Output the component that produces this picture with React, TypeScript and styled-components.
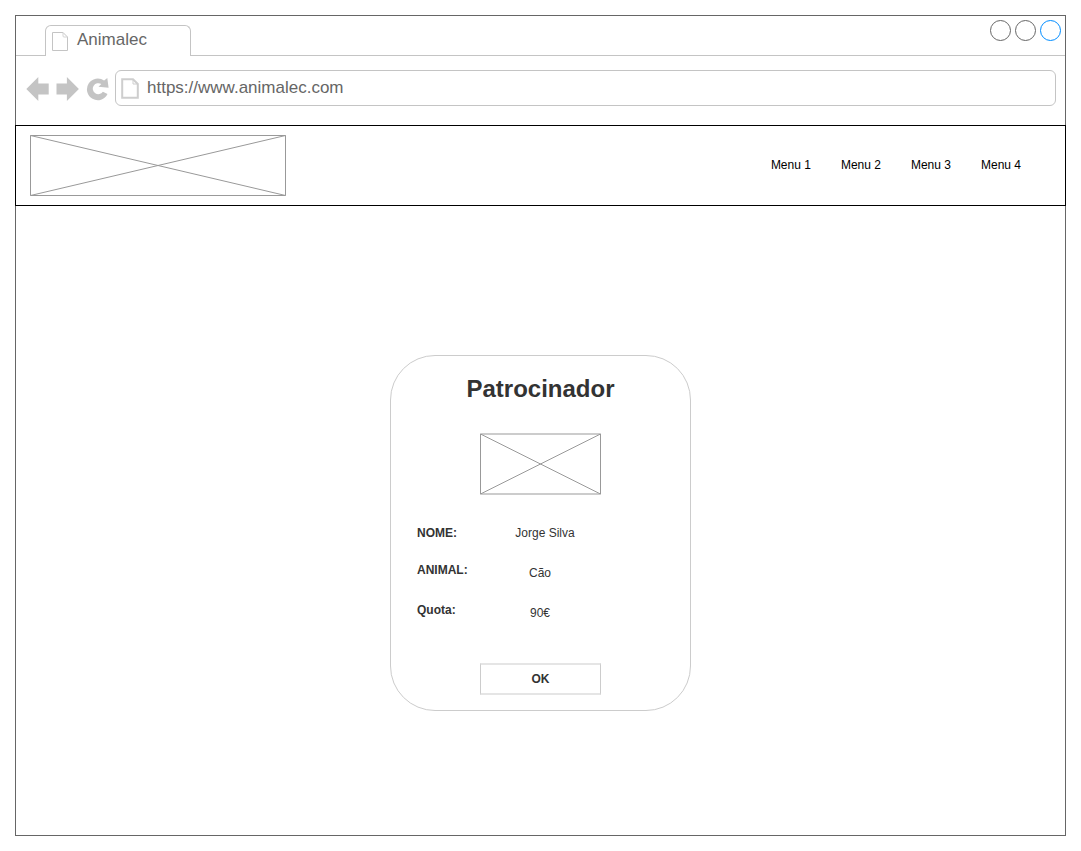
import React from 'react';
import styled, { createGlobalStyle } from 'styled-components';

const GlobalStyle = createGlobalStyle`
  *, *::before, *::after { box-sizing: border-box; }
  body {
    margin: 0;
    background: #fff;
    font-family: "Liberation Sans", Arial, Helvetica, sans-serif;
  }
`;

const Page = styled.div`
  min-height: 100vh;
  padding: 15px;
  display: flex;
  flex-direction: column;
`;

const BrowserWindow = styled.div`
  flex: 1;
  display: flex;
  flex-direction: column;
  border: 1px solid #666;
`;

const TabStrip = styled.div`
  display: flex;
  justify-content: space-between;
  align-items: flex-start;
  height: 40px;
  padding: 4px 4px 0 29px;
  border-bottom: 1px solid #c4c4c4;
`;

const Tab = styled.button`
  display: flex;
  align-items: flex-start;
  gap: 8px;
  width: 146px;
  height: 31px;
  margin: 5px 0 0;
  padding: 4px 6px 0;
  border: 1px solid #c4c4c4;
  border-bottom: 0;
  border-radius: 6px 6px 0 0;
  background: #fff;
  color: #666;
  font: 17px/20px "Liberation Sans", Arial, sans-serif;

  svg { margin-top: 2px; }
`;

const WindowControls = styled.div`
  display: flex;
  gap: 4px;
`;

const WindowControl = styled.button<{ $color: string }>`
  width: 21px;
  height: 21px;
  padding: 0;
  border: 1px solid ${(p) => p.$color};
  border-radius: 50%;
  background: #fff;
`;

const Toolbar = styled.div`
  display: flex;
  align-items: center;
  padding: 14px 9px 19px 10px;
`;

const ToolButton = styled.button`
  display: block;
  height: 30px;
  margin-right: 6px;
  padding: 2px 0;
  border: 0;
  background: none;

  svg { display: block; }
`;

const AddressBar = styled.label`
  flex: 1;
  display: flex;
  align-items: center;
  gap: 8px;
  height: 36px;
  padding: 0 5px;
  border: 1px solid #c4c4c4;
  border-radius: 6px;
`;

const AddressInput = styled.input`
  flex: 1;
  min-width: 0;
  height: 34px;
  padding: 0;
  border: 0;
  outline: 0;
  background: none;
  color: #666;
  font: 17px/20px "Liberation Sans", Arial, sans-serif;
`;

const SiteHeader = styled.header`
  display: flex;
  justify-content: space-between;
  align-items: center;
  height: 81px;
  margin: 0 -1px;
  padding: 0 44px 0 14px;
  border: 1px solid #000;
`;

const Menu = styled.nav`
  display: flex;
  gap: 30px;
  padding-bottom: 2px;
`;

const MenuLink = styled.a`
  color: #000;
  font-size: 12px;
  line-height: 14px;
  text-decoration: none;
`;

const Content = styled.main`
  display: flex;
  justify-content: center;
  padding: 149px 20px 124px;
`;

const Card = styled.section`
  display: flex;
  flex-direction: column;
  align-items: center;
  width: 301px;
  padding: 19px 26px 15px;
  border: 1px solid #ccc;
  border-radius: 45px;
  color: #333;
  font-size: 12px;
`;

const Title = styled.h1`
  margin: 0 0 30px;
  font-size: 24px;
  line-height: 28px;
`;

const Details = styled.dl`
  align-self: stretch;
  display: flex;
  flex-direction: column;
  gap: 20px;
  margin: 28px 0 40px;
`;

const DetailRow = styled.div<{ $align: 'center' | 'start' }>`
  display: flex;
  align-items: ${(p) => p.$align};
  height: 20px;
`;

const DetailLabel = styled.dt`
  width: 83px;
  line-height: 14px;
  font-weight: bold;
`;

const DetailValue = styled.dd<{ $width: number }>`
  width: ${(p) => p.$width}px;
  margin: 0;
  line-height: 20px;
  text-align: center;
`;

const OkButton = styled.button`
  width: 121px;
  height: 32px;
  padding: 0;
  border: solid #ccc;
  border-width: 2px 1px;
  border-top-color: #e5e5e5;
  border-bottom-color: #e5e5e5;
  background: #fff;
  color: #333;
  font: bold 12px/14px "Liberation Sans", Arial, sans-serif;
`;

const Logo = () => (
  <svg width="256" height="61" viewBox="0 0 256 61" fill="none" stroke="#999" role="img" aria-label="Logo">
    <path d="M.5.5h255v60H.5zM.5.5l255 60M.5 60.5l255-60" />
  </svg>
);

const Photo = () => (
  <svg width="121" height="62" viewBox="0 0 121 62" fill="none" stroke="#999" role="img" aria-label="Patrocinador">
    <path d="M.5 1h120v60H.5zM.5 1l120 60M.5 61l120-60" />
  </svg>
);

const TabPageIcon = () => (
  <svg width="17" height="20" viewBox="0 0 17 20" fill="none" stroke="#c4c4c4" aria-hidden="true">
    <path d="M.5.5h10.500l4.500 4.500v13.500H.5z" />
    <path d="M11 .5v3.500q0 1 1 1h3.500" stroke="#d4d4d4" />
  </svg>
);

const AddressPageIcon = () => (
  <svg width="18" height="21" viewBox="0 0 18 21" fill="none" stroke="#cecece" strokeWidth="2" aria-hidden="true">
    <path d="M1.200 1.200h10.800l4.800 4.800v13.800H1.200z" />
    <path d="M12 1.200v4.800h4.800" strokeWidth="1" />
  </svg>
);

const details = [
  { label: 'NOME:', value: 'Jorge Silva', align: 'center', width: 90 },
  { label: 'ANIMAL:', value: 'Cão', align: 'start', width: 80 },
  { label: 'Quota:', value: '90€', align: 'start', width: 80 },
] as const;

export default function App() {
  return (
    <Page>
      <GlobalStyle />
      <BrowserWindow>
        <TabStrip>
          <Tab type="button">
            <TabPageIcon />
            Animalec
          </Tab>
          <WindowControls>
            <WindowControl type="button" aria-label="Minimizar" $color="#666" />
            <WindowControl type="button" aria-label="Maximizar" $color="#666" />
            <WindowControl type="button" aria-label="Fechar" $color="#008cff" />
          </WindowControls>
        </TabStrip>
        <Toolbar>
          <ToolButton type="button" aria-label="Voltar">
            <svg width="24" height="26" viewBox="0 0 24 26" fill="#c4c4c4">
              <path d="M.3 14 12.300 2v6.500h10.400v10.900H12.300v6.500z" />
            </svg>
          </ToolButton>
          <ToolButton type="button" aria-label="Avançar">
            <svg width="24" height="26" viewBox="0 0 24 26" fill="#c4c4c4">
              <path d="M22.900 14 10.900 2v6.500H.5v10.900h10.400v6.500z" />
            </svg>
          </ToolButton>
          <ToolButton type="button" aria-label="Recarregar">
            <svg width="23" height="26" viewBox="0 0 23 26" fill="#c4c4c4">
              <path d="M18.100 5.600 21.300 3.100 22.600 12.800 12.500 11.800 15.300 9.100A5.500 5.500 0 1 0 16.900 16.700L21.500 19A10.800 10.800 0 1 1 18.100 5.600z" />
            </svg>
          </ToolButton>
          <AddressBar>
            <AddressPageIcon />
            <AddressInput type="text" aria-label="Endereço" defaultValue="https://www.animalec.com" />
          </AddressBar>
        </Toolbar>
        <SiteHeader>
          <Logo />
          <Menu>
            {[1, 2, 3, 4].map((n) => (
              <MenuLink key={n} href="#">{`Menu ${n}`}</MenuLink>
            ))}
          </Menu>
        </SiteHeader>
        <Content>
          <Card>
            <Title>Patrocinador</Title>
            <Photo />
            <Details>
              {details.map((d) => (
                <DetailRow key={d.label} $align={d.align}>
                  <DetailLabel>{d.label}</DetailLabel>
                  <DetailValue $width={d.width}>{d.value}</DetailValue>
                </DetailRow>
              ))}
            </Details>
            <OkButton type="button">OK</OkButton>
          </Card>
        </Content>
      </BrowserWindow>
    </Page>
  );
}
